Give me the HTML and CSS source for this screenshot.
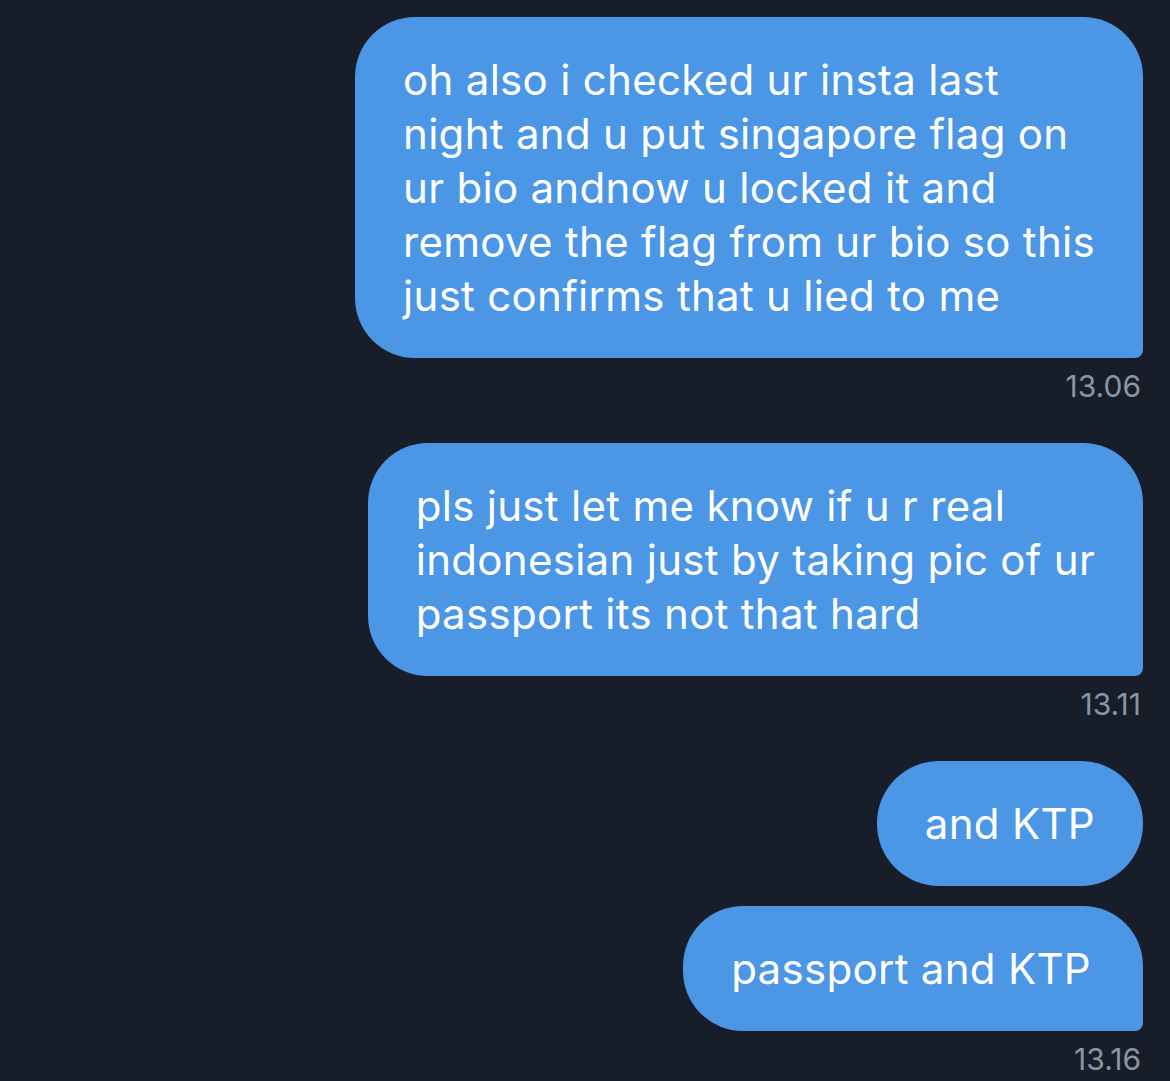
FILE: index.html
```html
<!DOCTYPE html>
<html lang="en">

<head>
    <meta charset="UTF-8">
    <meta name="viewport" content="width=device-width, initial-scale=1.0">
    <title>Messages</title>
    <link rel="stylesheet" href="styles.css">
</head>

<body>
    <div class="chat">
        <div class="group">
            <div class="bubble first">
                oh also i checked ur insta last<br>
                night and u put singapore flag on<br>
                ur bio andnow u locked it and<br>
                remove the flag from ur bio so this<br>
                just confirms that u lied to me
            </div>
            <div class="time">13.06</div>
        </div>
        <div class="group">
            <div class="bubble first">
                pls just let me know if u r real<br>
                indonesian just by taking pic of ur<br>
                passport its not that hard
            </div>
            <div class="time">13.11</div>
        </div>
        <div class="group">
            <div class="bubble pill">and KTP</div>
            <div class="bubble last">passport and KTP</div>
            <div class="time">13.16</div>
        </div>
    </div>
</body>

</html>
```

FILE: styles.css
```css
body {
    margin: 0px;
    background-color: #171e29;
}

* {
    font-family: Inter, 'Noto Sans', sans-serif;
}

.chat {
    padding: 17px 27px 0px 0px;
    display: flex;
    flex-direction: column;
    align-items: flex-end;
}

.group {
    display: flex;
    flex-direction: column;
    align-items: flex-end;
    gap: 20px;
    margin-bottom: 39px;
}

.bubble {
    width: fit-content;
    background-color: #4b97e6;
    color: #ffffff;
    font-size: 42px;
    line-height: 54px;
    letter-spacing: 0.3px;
    padding: 36px 48px 35px 48px;
    box-sizing: border-box;
}

.first {
    border-radius: 60px 60px 8px 60px;
}

.pill {
    border-radius: 62px;
}

.last {
    border-radius: 60px 60px 8px 60px;
    padding-right: 52px;
}

.time {
    color: #8a95a3;
    font-size: 30px;
    line-height: 36px;
    margin-top: -10px;
    margin-right: 2px;
}
```
